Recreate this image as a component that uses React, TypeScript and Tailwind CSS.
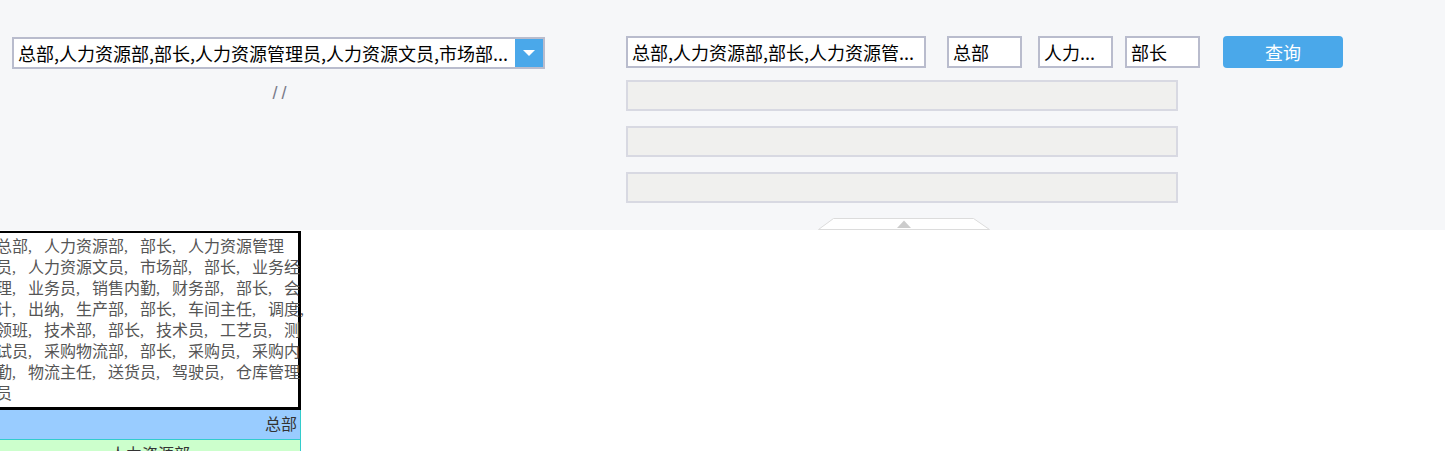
import React from "react";

const CJK = { fontFamily: '"Noto Sans CJK SC", "Noto Sans", sans-serif' };
const SERIF = { fontFamily: '"Liberation Serif", "Noto Sans CJK SC", serif' };

const lines = [
  "总部, 人力资源部, 部长, 人力资源管理",
  "员, 人力资源文员, 市场部, 部长, 业务经",
  "理, 业务员, 销售内勤, 财务部, 部长, 会",
  "计, 出纳, 生产部, 部长, 车间主任, 调度,",
  "领班, 技术部, 部长, 技术员, 工艺员, 测",
  "试员, 采购物流部, 部长, 采购员, 采购内",
  "勤, 物流主任, 送货员, 驾驶员, 仓库管理",
  "员",
];

function Line({ text }: { text: string }) {
  const parts = text.split(", ");
  return (
    <div className="whitespace-nowrap h-[21px]">
      {parts.map((p, i) => {
        const trailing = p.endsWith(",");
        const body = trailing ? p.slice(0, -1) : p;
        return (
          <React.Fragment key={i}>
            {body}
            {trailing && <span className="inline-block w-[6px]">,</span>}
            {i < parts.length - 1 && <span className="inline-block w-4">,</span>}
          </React.Fragment>
        );
      })}
    </div>
  );
}

function Input({ value, w, extra = "" }: { value: string; w: string; extra?: string }) {
  return (
    <div className={`${w} h-8 border-2 border-[#b9bccd] bg-white flex items-center pl-1 overflow-hidden ${extra}`}>
      <span className="whitespace-nowrap text-[18px] text-black leading-6">{value}</span>
    </div>
  );
}

export default function App() {
  return (
    <div className="w-[1445px] h-[451px] overflow-hidden bg-white" style={CJK}>
      <div className="h-[230px] bg-[#f6f7f9] flex">
        <div className="w-[626px] shrink-0 pl-3 pt-[37px]">
          <div className="w-[533px] h-8 border-2 border-[#b9bccd] bg-white flex items-center">
            <div className="flex-1 min-w-0 pl-1 overflow-hidden whitespace-nowrap text-[18px] text-black leading-6">
              总部,人力资源部,部长,人力资源管理员,人力资源文员,市场部...
            </div>
            <div className="w-7 h-7 bg-[#4aa8ea] flex items-center justify-center">
              <svg width="12" height="7" viewBox="0 0 12 7">
                <polygon points="0,0 12,0 6,6" fill="#ffffff" />
              </svg>
            </div>
          </div>
          <div
            className="w-[533px] pl-[6px] text-center mt-[14px] text-[18px] leading-5 text-[#7a7a8a] tracking-[4px]"
            style={{ fontFamily: '"Liberation Sans", sans-serif' }}
          >
            //
          </div>
        </div>
        <div className="pt-9 flex flex-col">
          <div className="flex items-center">
            <Input value="总部,人力资源部,部长,人力资源管..." w="w-[300px]" />
            <Input value="总部" w="w-[75px]" extra="ml-[21px]" />
            <Input value="人力..." w="w-[75px]" extra="ml-4" />
            <Input value="部长" w="w-[75px]" extra="ml-3" />
            <button className="ml-[23px] w-[120px] h-8 rounded bg-[#4aa8ea] text-white text-[18px] flex items-center justify-center">
              查询
            </button>
          </div>
          <div className="mt-3 w-[552px] flex flex-col gap-[15px]">
            <div className="h-[31px] border-2 border-[#d8d9e2] bg-[#f0f0ee]" />
            <div className="h-[31px] border-2 border-[#d8d9e2] bg-[#f0f0ee]" />
            <div className="h-[31px] border-2 border-[#d8d9e2] bg-[#f0f0ee]" />
          </div>
          <div className="mt-[15px] ml-[192px]">
            <svg width="172" height="12" viewBox="0 0 172 12" className="block">
              <polygon points="15.5,0.5 155.5,0.5 171.5,11.5 0.5,11.5" fill="#ffffff" stroke="#dcdcdc" />
              <polygon points="79,10 93,10 86,2.5" fill="#cccccc" />
            </svg>
          </div>
        </div>
      </div>

      <div style={SERIF}>
        <div className="mt-px ml-[-7px] w-[308px] border-[3px] border-t-2 border-black py-[3px] text-base leading-[21px] text-[#555]">
          {lines.map((l, i) => (
            <Line key={i} text={l} />
          ))}
        </div>
        <div className="w-[301px] text-base text-[#333]">
          <div className="h-[30px] bg-[#99ccff] border-r border-b border-[#33cccc] text-right pr-[3px] leading-[29px]">
            总部
          </div>
          <div className="h-[30px] bg-[#ccffcc] border-r border-[#33cccc] text-center leading-[29px]">
            人力资源部
          </div>
        </div>
      </div>
    </div>
  );
}
